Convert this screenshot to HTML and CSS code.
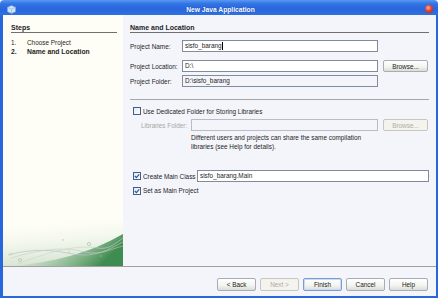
FILE: index.html
```html
<!DOCTYPE html>
<html>
<head>
<meta charset="utf-8">
<link rel="stylesheet" href="styles.css">
</head>
<body>
<div class="window">
  <div class="titlebar">
    <svg class="appicon" width="9" height="9" viewBox="0 0 9 9">
      <path d="M4.5 0.5 L8.5 2.3 L8.5 6.7 L4.5 8.5 L0.5 6.7 L0.5 2.3 Z" fill="#cfe3fb" stroke="#7fa6d8" stroke-width="0.6"/>
      <path d="M0.5 2.3 L4.5 4.1 L8.5 2.3 M4.5 4.1 L4.5 8.5" fill="none" stroke="#8fb0dc" stroke-width="0.6"/>
    </svg>
    <span class="title">New Java Application</span>
    <span class="close"></span>
  </div>
  <div class="frame">
    <div class="main">
      <aside class="steps">
        <div class="heading">Steps</div>
        <ol class="steplist">
          <li><span class="num">1.</span>Choose Project</li>
          <li class="current"><span class="num">2.</span>Name and Location</li>
        </ol>
        <svg class="wave" width="120" height="46" viewBox="0 0 120 46" preserveAspectRatio="none">
          <defs>
            <linearGradient id="g1" x1="0" y1="0" x2="0.2" y2="1">
              <stop offset="0" stop-color="#fefef6" stop-opacity="0"/>
              <stop offset="0.6" stop-color="#eaf1e4" stop-opacity="0.8"/>
              <stop offset="1" stop-color="#d6e4d3"/>
            </linearGradient>
            <linearGradient id="g2" x1="0" y1="0" x2="1" y2="0.3">
              <stop offset="0" stop-color="#ffffff" stop-opacity="0"/>
              <stop offset="0.45" stop-color="#9cc3a0" stop-opacity="0.45"/>
              <stop offset="1" stop-color="#3f8c50"/>
            </linearGradient>
          </defs>
          <rect x="0" y="0" width="120" height="46" fill="url(#g1)"/>
          <path d="M10 46 C50 42 85 34 120 14 L120 46 Z" fill="url(#g2)"/>
          <path d="M5 35 C30 28 50 30 70 34 C90 38 105 30 120 22" fill="none" stroke="#b9c4bc" stroke-width="0.7"/>
          <path d="M8 38 C35 30 60 26 82 32 C98 36 110 28 120 26" fill="none" stroke="#c3ccc4" stroke-width="0.6"/>
          <path d="M15 44 C40 34 70 24 95 28 C105 30 112 24 120 18" fill="none" stroke="#cbd3cb" stroke-width="0.6"/>
          <circle cx="17" cy="40" r="1.5" fill="none" stroke="#b0bab2" stroke-width="0.6"/>
          <circle cx="86" cy="24" r="1.6" fill="none" stroke="#a7b7aa" stroke-width="0.6"/>
          <circle cx="8" cy="34" r="1" fill="none" stroke="#c0c8c2" stroke-width="0.5"/>
          <circle cx="60" cy="20" r="0.8" fill="#b8c6ba"/>
          <circle cx="66" cy="32" r="0.7" fill="#b8c6ba"/>
          <circle cx="98" cy="36" r="0.7" fill="#9ab49f"/>
        </svg>
      </aside>
      <section class="content">
        <div class="heading">Name and Location</div>
        <div class="row first">
          <span class="label">Project Name:</span>
          <span class="field wide-field">sisfo_barang<span class="caret"></span></span>
          <span class="spacer"></span>
        </div>
        <div class="row second">
          <span class="label">Project Location:</span>
          <span class="field wide-field">D:\</span>
          <span class="btn small">Browse...</span>
        </div>
        <div class="row third">
          <span class="label">Project Folder:</span>
          <span class="field wide-field readonly">D:\sisfo_barang</span>
          <span class="spacer"></span>
        </div>
        <div class="sep"></div>
        <div class="check-row lib-check">
          <span class="box"></span>
          <span>Use Dedicated Folder for Storing Libraries</span>
        </div>
        <div class="row lib-row">
          <span class="label dim lib-label">Libraries Folder:</span>
          <span class="field lib-field disabled"></span>
          <span class="btn small disabled-btn">Browse...</span>
        </div>
        <p class="desc">Different users and projects can share the same compilation libraries (see Help for details).</p>
        <div class="check-row main-class">
          <span class="box checked"><svg width="6" height="6" viewBox="0 0 6 6"><path d="M0.8 3 L2.4 4.6 L5.2 1.3" fill="none" stroke="#2a55a8" stroke-width="1.2"/></svg></span>
          <span class="mc-label">Create Main Class</span>
          <span class="field mc-field">sisfo_barang.Main</span>
        </div>
        <div class="check-row set-main">
          <span class="box checked"><svg width="6" height="6" viewBox="0 0 6 6"><path d="M0.8 3 L2.4 4.6 L5.2 1.3" fill="none" stroke="#2a55a8" stroke-width="1.2"/></svg></span>
          <span>Set as Main Project</span>
        </div>
      </section>
    </div>
    <div class="footer">
      <span class="btn">&lt; Back</span>
      <span class="btn disabled-btn">Next &gt;</span>
      <span class="btn default">Finish</span>
      <span class="btn">Cancel</span>
      <span class="btn">Help</span>
    </div>
  </div>
</div>
</body>
</html>
```

FILE: styles.css
```css
* { box-sizing: border-box; }
html, body { margin: 0; padding: 0; }
body {
  width: 440px;
  height: 302px;
  background: #ffffff;
  font-family: "Liberation Sans", Arial, sans-serif;
  font-size: 6.4px;
  color: #1e1e1e;
  overflow: hidden;
}
.window {
  width: 438px;
  height: 298px;
  display: flex;
  flex-direction: column;
}
.titlebar {
  height: 15px;
  border-radius: 4px 4px 0 0;
  background: linear-gradient(to bottom, #5a98f2 0%, #3274e4 25%, #2866dc 60%, #3070e0 100%);
  display: flex;
  align-items: center;
  position: relative;
  padding: 0 5px 0 7px;
}
.appicon { flex: none; margin-top: 3px; }
.title {
  flex: 1;
  text-align: center;
  color: #ffffff;
  font-weight: bold;
  font-size: 6.7px;
  margin-top: 3px;
  text-shadow: 0 0 1px #0a3da0;
}
.close {
  width: 8px;
  height: 8px;
  border-radius: 50%;
  background: radial-gradient(circle at 40% 35%, #ffb0a0 0%, #e8402a 45%, #b81c10 100%);
  margin-top: 3px;
  flex: none;
}
.frame {
  flex: 1;
  display: flex;
  flex-direction: column;
  background: #f4f5fa;
  border-left: 3px solid #2866dc;
  border-right: 2px solid #2866dc;
  border-bottom: 2px solid #2866dc;
}
.main {
  height: 251px;
  display: flex;
}
.steps {
  width: 120px;
  background: #fefef6;
  padding: 0 6px 0 8px;
  position: relative;
  flex: none;
}
.wave {
  position: absolute;
  left: 0;
  bottom: 0;
  display: block;
}
.heading {
  font-weight: bold;
  font-size: 7px;
  margin-top: 8px;
  line-height: 9px;
  border-bottom: 1px solid #6f6f6f;
  padding-bottom: 0;
}
.steplist {
  list-style: none;
  margin: 6px 0 0;
  padding: 0;
  line-height: 8.5px;
}
.steplist .num { display: inline-block; width: 16px; }
.steplist .current { font-weight: bold; font-size: 6.8px; }
.content {
  flex: 1;
  padding: 0 7px 0 7px;
}
.row {
  display: flex;
  align-items: center;
  height: 12px;
}
.row.first { margin-top: 7px; }
.row.second { margin-top: 8px; }
.row.third { margin-top: 3px; }
.label { width: 52px; flex: none; }
.field {
  height: 12px;
  border: 1px solid #7f8c9e;
  background: #ffffff;
  line-height: 10px;
  padding-left: 2px;
  display: flex;
  align-items: center;
  white-space: nowrap;
}
.wide-field { width: 196px; flex: none; }
.readonly { background: #f4f5fa; }
.caret {
  display: inline-block;
  width: 1px;
  height: 8px;
  background: #000;
  margin-left: 0.5px;
}
.spacer { width: 50px; }
.btn {
  display: inline-flex;
  align-items: center;
  justify-content: center;
  width: 39px;
  height: 13px;
  border: 1px solid #a7adb8;
  border-radius: 2px;
  background: linear-gradient(to bottom, #ffffff 0%, #f3f3ef 60%, #dcdcd6 100%);
  color: #222;
  flex: none;
}
.btn.small { width: 45px; margin-left: 5px; height: 12px; }
.disabled-btn { color: #b0aca0; border-color: #c9c7bd; background: #f4f3ee; }
.btn.default { border-color: #7d9bd0; box-shadow: inset 0 0 0 1px #c9dbf5; }
.sep {
  height: 1px;
  background: #a6a6a6;
  margin-top: 12px;
}
.check-row {
  display: flex;
  align-items: center;
  padding-left: 3px;
}
.box {
  width: 8px;
  height: 8px;
  border: 1px solid #3b5f9a;
  background: linear-gradient(135deg, #e6e6e0, #ffffff);
  margin-right: 2px;
  display: flex;
  align-items: center;
  justify-content: center;
  flex: none;
}
.box svg { display: block; }
.lib-check { margin-top: 7px; height: 8px; }
.lib-row { margin-top: 4px; padding-left: 11px; }
.lib-label { width: 50px; }
.dim { color: #a5a5a5; }
.lib-field { width: 187px; flex: none; }
.disabled { border-color: #b9bcc4; background: #f4f5fa; }
.desc {
  margin: 2px 0 0 61px;
  width: 190px;
  line-height: 9px;
}
.main-class { margin-top: 19px; height: 12px; }
.mc-label { width: 54px; flex: none; }
.mc-field { flex: 1; }
.set-main { margin-top: 4px; height: 9px; }
.footer {
  flex: 1;
  border-top: 1px solid #a0a0a0;
  display: flex;
  justify-content: flex-end;
  align-items: flex-start;
  gap: 4px;
  padding: 11px 8px 0 0;
}
```
